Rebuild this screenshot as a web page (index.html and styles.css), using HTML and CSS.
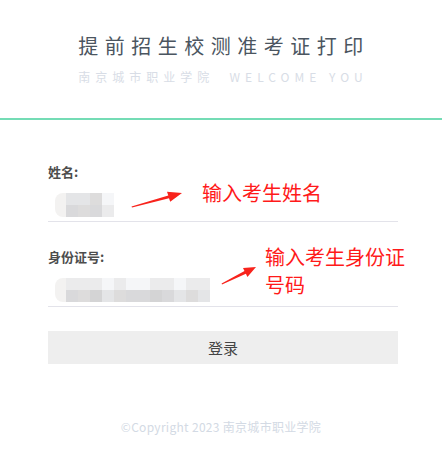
FILE: index.html
```html
<!DOCTYPE html>
<html lang="zh-CN">
<head>
    <meta charset="UTF-8">
    <meta name="viewport" content="width=device-width, initial-scale=1.0">
    <title>提前招生校测准考证打印</title>
    <link rel="stylesheet" href="styles.css">
</head>
<body>

    <!-- Header -->
    <div class="header">
        <h1>提前招生校测准考证打印</h1>
        <p class="sub">南京城市职业学院&nbsp;&nbsp;WELCOME YOU</p>
    </div>

    <!-- Login Form -->
    <div class="login">
        <div class="field">
            <label>姓名:</label>
            <div class="input-row">
                <div class="mosaic">
                    <div class="row">
                        <span class="edge"></span><span class="g3"></span><span class="g3"></span><span class="g4"></span><span class="g1"></span>
                    </div>
                    <div class="row">
                        <span class="edge"></span><span class="g5"></span><span class="g4"></span><span class="g5"></span><span class="g2"></span>
                    </div>
                </div>
            </div>
            <svg class="arrow arrow-name" width="58" height="24" viewBox="0 0 58 24">
                <polygon points="4,19.5 41,10.3 42.2,13.8 54,5 39,3.8 40.3,7.6 3.5,18.5" fill="#f8231c"/>
            </svg>
            <span class="note note-name">输入考生姓名</span>
        </div>

        <div class="field">
            <label>身份证号:</label>
            <div class="input-row">
                <div class="mosaic">
                    <div class="row">
                        <span class="edge"></span><span class="g2"></span><span class="g2"></span><span class="g2"></span><span class="g1"></span><span class="g2"></span><span class="g1"></span><span class="g1"></span><span class="g2"></span><span class="g2"></span><span class="g1"></span><span class="g2"></span><span class="g2"></span>
                    </div>
                    <div class="row">
                        <span class="edge"></span><span class="g5"></span><span class="g4"></span><span class="g6"></span><span class="g3"></span><span class="g4"></span><span class="g5"></span><span class="g5"></span><span class="g6"></span><span class="g5"></span><span class="g3"></span><span class="g4"></span><span class="g3"></span>
                    </div>
                </div>
            </div>
            <svg class="arrow arrow-id" width="42" height="26" viewBox="0 0 42 26">
                <polygon points="4,22.5 27.9,11.7 29.4,14.9 38,5 25,5.9 26.5,9.1 3.6,21.4" fill="#f8231c"/>
            </svg>
            <span class="note note-id">输入考生身份证号码</span>
        </div>

        <button class="btn">登录</button>
    </div>

    <!-- Footer -->
    <p class="footer">©Copyright 2023 南京城市职业学院</p>

</body>
</html>
```

FILE: styles.css
```css
/* General Styles */
body {
    margin: 0;
    padding: 0;
    font-family: "Noto Sans CJK SC", "Liberation Sans", sans-serif;
    background-color: #fff;
    color: #333;
}

/* Header */
.header {
    height: 85px;
    padding-top: 33px;
    text-align: center;
    border-bottom: 2px solid #74dcb5;
}

.header h1 {
    margin: 0;
    font-size: 20px;
    line-height: 26px;
    font-weight: normal;
    letter-spacing: 6.5px;
    padding-left: 6px;
    color: #4b5560;
}

.header .sub {
    margin: 10px 0 0;
    font-size: 12px;
    line-height: 16px;
    letter-spacing: 5px;
    padding-left: 4px;
    color: #d8dde6;
}

/* Form */
.login {
    padding: 43px 44px 0 48px;
}

.field {
    position: relative;
    margin-bottom: 26px;
}

.field label {
    display: block;
    font-size: 13px;
    line-height: 18px;
    font-weight: bold;
    color: #4d4d4d;
}

.input-row {
    box-sizing: border-box;
    height: 41px;
    padding-top: 12px;
    border-bottom: 1px solid #e3e3ea;
}

.mosaic {
    margin-left: 7px;
}

.mosaic .row {
    display: flex;
    height: 12px;
}

.mosaic span {
    width: 12px;
    height: 12px;
}

.mosaic .edge {
    width: 11px;
    background-color: #f3f2f1;
}

.mosaic .row:first-child .edge {
    border-top-left-radius: 8px;
}

.mosaic .row:last-child .edge {
    border-bottom-left-radius: 8px;
}

.g1 { background-color: #f5f6f8; }
.g2 { background-color: #ebebec; }
.g3 { background-color: #e4e5e7; }
.g4 { background-color: #dddcdc; }
.g5 { background-color: #d9d9db; }
.g6 { background-color: #d4d4d5; }

/* Annotations */
.arrow {
    position: absolute;
}

.arrow-name {
    left: 80px;
    top: 25px;
}

.arrow-id {
    left: 170px;
    top: 14px;
}

.note {
    position: absolute;
    font-size: 20px;
    line-height: 28px;
    color: #ff1a1a;
}

.note-name {
    left: 154px;
    top: 16px;
}

.note-id {
    left: 217px;
    top: -5px;
    width: 145px;
}

/* Button */
.btn {
    display: block;
    width: 100%;
    height: 33px;
    margin-top: -2px;
    border: none;
    background-color: #eeeeee;
    font-family: inherit;
    font-size: 15px;
    line-height: 33px;
    padding: 0;
    color: #444;
    cursor: pointer;
}

/* Footer */
.footer {
    margin: 54px 0 0;
    text-align: center;
    font-size: 12px;
    line-height: 18px;
    letter-spacing: 0.3px;
    color: #d3dae4;
}
```
